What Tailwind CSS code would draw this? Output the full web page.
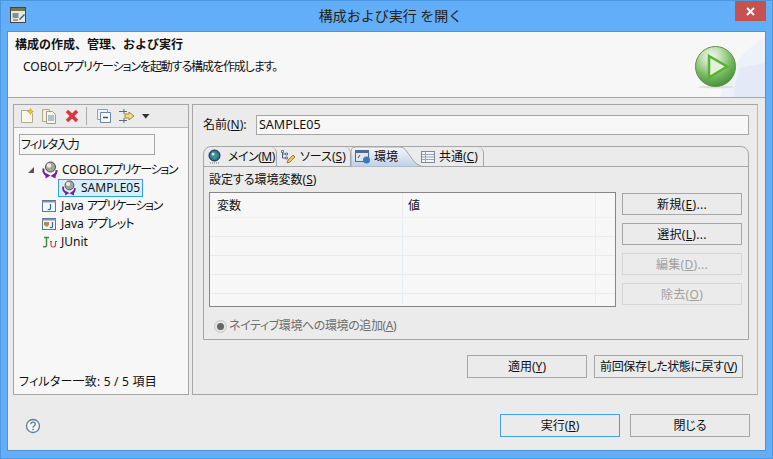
<!DOCTYPE html>
<html lang="ja">
<head>
    <meta charset="UTF-8">
    <title>構成および実行 を開く</title>
    <script src="https://cdn.jsdelivr.net/npm/@tailwindcss/browser@4"></script>
</head>
<body class="m-0 overflow-hidden bg-[#62aef8]">
    <svg class="hidden">
        <symbol id="cobol" viewBox="0 0 18 18">
            <path d="M2.500 7.500a6.500 6.500 0 0 0 3.500 7M15.500 9a6 6 0 0 1-3.500 6" fill="none" stroke="#74229a" stroke-width="2"/>
            <path d="M4.500 12l5 2.500-5 3zM15 11.500l-5.500 3.500 5 2.500z" fill="#74229a"/>
            <circle cx="9.500" cy="6" r="5" fill="#a3a596" stroke="#4d5046"/>
            <circle cx="8" cy="4.500" r="2.300" fill="#ecece6"/>
        </symbol>
    </svg>

    <div class="w-[773px] h-[459px] flex flex-col border border-[#4d97de] bg-[#62aef8] font-['Noto_Sans','Noto_Sans_CJK_JP',sans-serif] [font-feature-settings:'palt'] text-[12px] leading-[16px] text-[#111] whitespace-nowrap">
        <!-- title bar -->
        <div class="relative h-[30px] shrink-0 flex items-center justify-center pl-[8px]">
            <svg class="absolute left-[9px] top-[6px]" width="17" height="17" viewBox="0 0 17 17">
                <rect x="0.500" y="0.500" width="15" height="15" fill="#e8ead8" stroke="#444"/>
                <rect x="1" y="1" width="14" height="3" fill="#6b7a45"/>
                <rect x="2.500" y="6" width="6" height="5" fill="#7f8f99"/>
                <path d="M9 12l5-5 1 1-5 5z" fill="#2a5db0"/>
                <path d="M3 13h5" stroke="#555"/>
            </svg>
            <span class="text-[14px] text-[#222] [font-feature-settings:normal]">構成および実行 を開く</span>
            <div class="absolute right-[6px] top-0 w-[31px] h-[20px] bg-[#c75050] flex items-center justify-center">
                <svg width="9" height="9" viewBox="0 0 9 9"><path d="M1 1l7 7M8 1l-7 7" stroke="#fff" stroke-width="2"/></svg>
            </div>
        </div>

        <!-- dialog body -->
        <div class="mx-[6px] mb-[7px] flex-1 flex flex-col border border-[#4f93d4] bg-[#ebebeb] min-h-0">
            <!-- header area -->
            <div class="relative h-[66px] shrink-0 bg-[#f7f7f7] border-b border-[#a6a6a6] pl-[7px] pt-[5px] overflow-hidden">
                <svg class="absolute right-0 top-0" width="130" height="66" viewBox="0 0 130 66">
                    <path d="M85 66c4-20 20-48 45-60v60z" fill="#edf1fa"/>
                    <path d="M99 66c1-14 3-22 6-30 8-2 17-3 25-5v35z" fill="#e4e9f7"/>
                </svg>
                <div class="relative font-bold leading-[16px] [font-feature-settings:normal]">構成の作成、管理、および実行</div>
                <div class="relative mt-[6px] ml-[8px] leading-[16px]">COBOL<span class="tracking-[-1.100px]">アプリケーションを起動する構成を作成します。</span></div>
                <svg class="absolute left-[686px] top-[14px]" width="44" height="44" viewBox="0 0 44 44">
                    <defs>
                        <radialGradient id="ball" cx="0.400" cy="0.250" r="0.800">
                            <stop offset="0" stop-color="#f2f8ee"/>
                            <stop offset="0.300" stop-color="#c2e0b4"/>
                            <stop offset="0.650" stop-color="#6fb75c"/>
                            <stop offset="1" stop-color="#3d8e35"/>
                        </radialGradient>
                    </defs>
                    <ellipse cx="22" cy="41" rx="18" ry="1.500" fill="#dde0dd"/>
                    <circle cx="21.500" cy="20.500" r="20" fill="url(#ball)" stroke="#6f8a4a"/>
                    <path d="M15 10l18 10.500-18 11z" fill="#e4f2dc" stroke="#5cb036" stroke-width="2.500"/>
                </svg>
            </div>

            <!-- main area -->
            <div class="flex-1 flex gap-[3px] pl-[5px] pr-[7px] pt-[6px] min-h-0">
                <!-- left panel -->
                <div class="w-[176px] h-[291px] shrink-0 flex flex-col border border-[#a6a6a6] bg-[#f7f7f7]">
                    <div class="h-[23px] shrink-0 flex items-center gap-[6px] pl-[5px] bg-[#ebebeb] border-b border-[#b8b8b8]">
                        <svg width="16" height="16" viewBox="0 0 16 16"><path d="M2.500 2.500h8l3 3v9h-11z" fill="#fbf8ea" stroke="#b0a98c"/><path d="M11.500 0.500l1 2 2 1-2 1-1 2-1-2-2-1 2-1z" fill="#f2c230" stroke="#b98a12" stroke-width="0.500"/></svg>
                        <svg width="16" height="16" viewBox="0 0 16 16"><path d="M1.500 1.500h7v12h-7z" fill="#f2efdf" stroke="#b0a98c"/><path d="M5.500 3.500h6l3 3v9h-9z" fill="#f7f5ea" stroke="#a0a08c"/><path d="M7 8h6M7 10h6M7 12h6" stroke="#6f8db5"/></svg>
                        <svg class="ml-[1px]" width="16" height="16" viewBox="0 0 16 16"><path d="M3 3l10 10M13 3L3 13" stroke="#d8363c" stroke-width="3.500"/></svg>
                        <div class="w-px h-[18px] bg-[#aaa]"></div>
                        <svg class="ml-[3px]" width="16" height="16" viewBox="0 0 16 16"><path d="M1.500 1.500h10v10h-10z" fill="#eef2f7" stroke="#8ea3bf"/><path d="M4.500 4.500h10v10h-10z" fill="#f6f8fb" stroke="#6c86a8"/><path d="M7 9.500h5" stroke="#33527a" stroke-width="1.500"/></svg>
                        <svg width="18" height="16" viewBox="0 0 18 16"><path d="M1 3.500h8M1 12.500h8M6 1v5M6 10v5" stroke="#5b6a7e"/><path d="M7 6h4V4l5 4-5 4v-2H7z" fill="#f0dd8a" stroke="#a88b32"/></svg>
                        <svg width="8" height="5" viewBox="0 0 8 5"><path d="M0 0h7.500l-3.750 4.500z" fill="#333"/></svg>
                    </div>
                    <div class="mt-[6px] ml-[5px] w-[136px] h-[21px] shrink-0 border border-[#a6a6a6] bg-[#f7f7f7] pl-[1px] leading-[19px] tracking-[-1.200px]">フィルタ入力</div>
                    <!-- tree -->
                    <div class="mt-[6px] flex flex-col">
                        <div class="h-[18px] flex items-center pl-[14px]">
                            <svg width="6" height="6" viewBox="0 0 6 6"><path d="M6 0v6H0z" fill="#555"/></svg>
                            <svg class="ml-[7px]" width="18" height="18"><use href="#cobol"/></svg>
                            <span class="ml-[3px]">COBOL<span class="tracking-[-1.300px]">アプリケーション</span></span>
                        </div>
                        <div class="h-[18px] flex items-center pl-[44px]">
                            <div class="h-[18px] flex items-center border border-[#35a3e0] bg-[#d8eefb] pl-[1px] pr-[2px]">
                                <svg width="18" height="16"><use href="#cobol"/></svg>
                                <span class="ml-[3px]">SAMPLE05</span>
                            </div>
                        </div>
                        <div class="h-[18px] flex items-center pl-[27px]">
                            <svg width="16" height="16" viewBox="0 0 16 16"><rect x="1.500" y="2.500" width="13" height="11" fill="#f3f6fa" stroke="#5f7690"/><path d="M1 3h14v1.500H1z" fill="#7f97b3"/><path d="M9.500 6v4.500c0 1.300-2 1.300-2.500 .5" fill="none" stroke="#3d6390" stroke-width="1.200"/></svg>
                            <span class="ml-[4px]">Java <span class="tracking-[-1.300px]">アプリケーション</span></span>
                        </div>
                        <div class="h-[18px] flex items-center pl-[27px]">
                            <svg width="16" height="16" viewBox="0 0 16 16"><rect x="1.500" y="2.500" width="13" height="11" fill="#f3f6fa" stroke="#5f7690"/><path d="M1 3h14v1.500H1z" fill="#7f97b3"/><path d="M3 6h5v3l-2 2-3-2z" fill="#b58a4a"/><path d="M11.500 6v4.500c0 1.300-2 1.300-2.500 .5" fill="none" stroke="#3d6390" stroke-width="1.200"/></svg>
                            <span class="ml-[4px]">Java <span class="tracking-[-1px]">アプレット</span></span>
                        </div>
                        <div class="h-[18px] flex items-center pl-[27px]">
                            <svg width="16" height="16" viewBox="0 0 16 16"><path d="M3 3.500h5M5.500 3.500v8c0 1.500-2 1.500-3.500 1" fill="none" stroke="#3a8f3f" stroke-width="1.500"/><path d="M9 7.500h2M14 7.500h2M10 7.500v4c0 2 4 2 4.500 0v-4" fill="none" stroke="#c8403c" stroke-width="1.100"/></svg>
                            <span class="ml-[4px]">JUnit</span>
                        </div>
                    </div>
                    <div class="mt-auto pl-[5px] pb-[4px] tracking-[0.2px]">フィルター一致: 5 / 5 項目</div>
                </div>

                <!-- right panel -->
                <div class="w-[566px] h-[291px] shrink-0 flex flex-col border border-[#a6a6a6] border-r-[#b8b8b8] pl-[10px] pr-[8px] pt-[10px]">
                    <div class="flex items-center h-[20px] shrink-0">
                        <span class="w-[53px]">名前(<span class="underline">N</span>):</span>
                        <div class="flex-1 h-[20px] border border-[#a6a6a6] bg-[#f7f7f7] pl-[2px] text-[12.500px] leading-[18px]">SAMPLE05</div>
                    </div>

                    <!-- tab folder -->
                    <div class="mt-[11px] h-[194px] shrink-0 flex flex-col border border-[#a6a6a6] rounded-t-[8px]">
                        <div class="h-[20px] shrink-0 flex border-b border-[#a6a6a6]">
                            <div class="w-[73px] shrink-0 flex items-center pl-[3px] border-r border-[#a6a6a6] rounded-tr-[6px]">
                                <svg width="16" height="16" viewBox="0 0 16 16"><circle cx="7.500" cy="6.500" r="5.500" fill="#2f66d0" stroke="#222"/><path d="M7.500 2l4 4.500-4 4.500-4-4.500z" fill="#3aa05a"/><circle cx="6" cy="5" r="1.500" fill="#cfe8ff"/><path d="M3 14h9" stroke="#777" stroke-dasharray="1 1"/></svg>
                                <span class="ml-[5px] tracking-[-0.5px]">メイン(<span class="underline">M</span>)</span>
                            </div>
                            <div class="w-[74px] shrink-0 flex items-center pl-[3px] border-r border-[#a6a6a6] rounded-tr-[6px]">
                                <svg width="16" height="16" viewBox="0 0 16 16"><path d="M2.500 2v7h3M2.500 5h3" fill="none" stroke="#4a5f80"/><path d="M1.500 1.500h2v2h-2zM5.500 4h2v2h-2zM5.500 8h2v2h-2z" fill="#dfe8f2" stroke="#4a5f80" stroke-width="0.800"/><path d="M7 14l1-3 5-5 2 2-5 5z" fill="#e6c36a" stroke="#8b6c20" stroke-width="0.800"/></svg>
                                <span class="ml-[4px]">ソース(<span class="underline">S</span>)</span>
                            </div>
                            <div class="relative w-[66px] shrink-0 flex items-center pl-[4px]">
                                <svg class="absolute left-0 top-0" width="76" height="20" viewBox="0 0 76 20">
                                    <defs>
                                        <linearGradient id="tabsel" x1="0" y1="0" x2="0" y2="1">
                                            <stop offset="0" stop-color="#f4f7fb"/>
                                            <stop offset="1" stop-color="#bcd0e8"/>
                                        </linearGradient>
                                    </defs>
                                    <path d="M0 20V5Q0 0 5 0H49C58 0 60 20 75 20z" fill="url(#tabsel)" stroke="#a6a6a6" stroke-width="1"/>
                                </svg>
                                <svg class="relative" width="16" height="16" viewBox="0 0 16 16"><rect x="0.500" y="1.500" width="13" height="11" fill="#dfe6ef" stroke="#4d6a90"/><path d="M1 2h12v2H1z" fill="#4d6a90"/><path d="M3 9l2-3" stroke="#33527a"/><circle cx="11.500" cy="11" r="3.500" fill="#3e78b8"/></svg>
                                <span class="relative ml-[3px]">環境</span>
                            </div>
                            <div class="relative w-[67px] shrink-0 flex items-center pl-[3px] border-r border-[#a6a6a6] rounded-tr-[6px]">
                                <svg width="16" height="16" viewBox="0 0 16 16"><rect x="1.500" y="2.500" width="13" height="11" fill="#f2f4f7" stroke="#7d8a99"/><path d="M2 5.500h12M2 8h12M2 10.500h12M5.500 3v10" stroke="#9aa5b2"/></svg>
                                <span class="ml-[3px]">共通(<span class="underline">C</span>)</span>
                            </div>
                        </div>

                        <div class="flex-1 min-h-0 pl-[5px] pr-[6px] pt-[5px]">
                            <div class="leading-[16px]">設定する環境変数(<span class="underline">S</span>)</div>
                            <div class="mt-[4px] flex gap-[6px] items-start">
                                <!-- table -->
                                <div class="w-[407px] h-[115px] shrink-0 border border-[#85858a] bg-[#f7f7f7] overflow-hidden">
                                    <div class="h-[25px] grid grid-cols-[193px_193px_1fr] border-b border-[#edf0f4]">
                                        <div class="pl-[7px] pt-[5px] border-r border-[#e8eef5]">変数</div>
                                        <div class="pl-[5px] pt-[5px] border-r border-[#e8eef5]">値</div>
                                        <div></div>
                                    </div>
                                    <div class="h-[19px] grid grid-cols-[193px_193px_1fr] border-b border-[#e9ecef]"><div class="border-r border-[#e8eef5]"></div><div class="border-r border-[#e8eef5]"></div><div></div></div>
                                    <div class="h-[19px] grid grid-cols-[193px_193px_1fr] border-b border-[#e9ecef]"><div class="border-r border-[#e8eef5]"></div><div class="border-r border-[#e8eef5]"></div><div></div></div>
                                    <div class="h-[19px] grid grid-cols-[193px_193px_1fr] border-b border-[#e9ecef]"><div class="border-r border-[#e8eef5]"></div><div class="border-r border-[#e8eef5]"></div><div></div></div>
                                    <div class="h-[19px] grid grid-cols-[193px_193px_1fr] border-b border-[#e9ecef]"><div class="border-r border-[#e8eef5]"></div><div class="border-r border-[#e8eef5]"></div><div></div></div>
                                    <div class="h-[10px] grid grid-cols-[193px_193px_1fr]"><div class="border-r border-[#e8eef5]"></div><div class="border-r border-[#e8eef5]"></div><div></div></div>
                                </div>
                                <div class="mt-[1px] w-[120px] flex flex-col gap-[8px]">
                                    <div class="h-[22px] border border-[#a6a6a6] text-center leading-[22px] tracking-[0.3px]">新規(<span class="underline">E</span>)...</div>
                                    <div class="h-[22px] border border-[#a6a6a6] text-center leading-[22px] tracking-[0.3px]">選択(<span class="underline">L</span>)...</div>
                                    <div class="h-[22px] border border-[#d6d6d6] text-center leading-[22px] tracking-[0.3px] text-[#a0a0a0]">編集(<span class="underline">D</span>)...</div>
                                    <div class="h-[22px] border border-[#d6d6d6] text-center leading-[22px] tracking-[0.3px] text-[#a0a0a0]">除去(<span class="underline">O</span>)</div>
                                </div>
                            </div>
                            <div class="mt-[11px] ml-[5px] flex items-center text-[#6d6d6d]">
                                <span class="w-[13px] h-[13px] rounded-full border border-[#c4cbc4] bg-[#e4e4e4] flex items-center justify-center">
                                    <span class="w-[7px] h-[7px] rounded-full bg-[#666]"></span>
                                </span>
                                <span class="ml-[2px] tracking-[-0.4px]">ネイティブ環境への環境の追加(<span class="underline">A</span>)</span>
                            </div>
                        </div>
                    </div>

                    <div class="mt-[15px] flex justify-end gap-[7px] pr-[6px]">
                        <div class="w-[120px] h-[23px] border border-[#a6a6a6] text-center leading-[21px]">適用(<span class="underline">Y</span>)</div>
                        <div class="w-[149px] h-[23px] border border-[#a6a6a6] text-center leading-[21px] tracking-[-0.4px]">前回保存した状態に戻す(<span class="underline">V</span>)</div>
                    </div>
                </div>
            </div>

            <!-- footer -->
            <div class="h-[57px] shrink-0 flex items-center pl-[17px] pr-[15px] pt-[8px]">
                <svg width="16" height="16" viewBox="0 0 16 16"><circle cx="8" cy="8" r="6.500" fill="#f4f6f9" stroke="#5f7a99" stroke-width="1.300"/><path d="M5.800 6.300c0-3 4.500-3 4.500 0 0 1.700-2.300 1.700-2.300 3.400" fill="none" stroke="#5f7a99" stroke-width="1.300"/><path d="M7.300 10.800h1.400v1.400H7.300z" fill="#5f7a99"/></svg>
                <div class="ml-auto flex gap-[10px]">
                    <div class="w-[120px] h-[23px] border border-[#3ea0ee] text-center leading-[21px]">実行(<span class="underline">R</span>)</div>
                    <div class="w-[120px] h-[23px] border border-[#a6a6a6] text-center leading-[21px]">閉じる</div>
                </div>
            </div>
        </div>
    </div>
</body>
</html>
